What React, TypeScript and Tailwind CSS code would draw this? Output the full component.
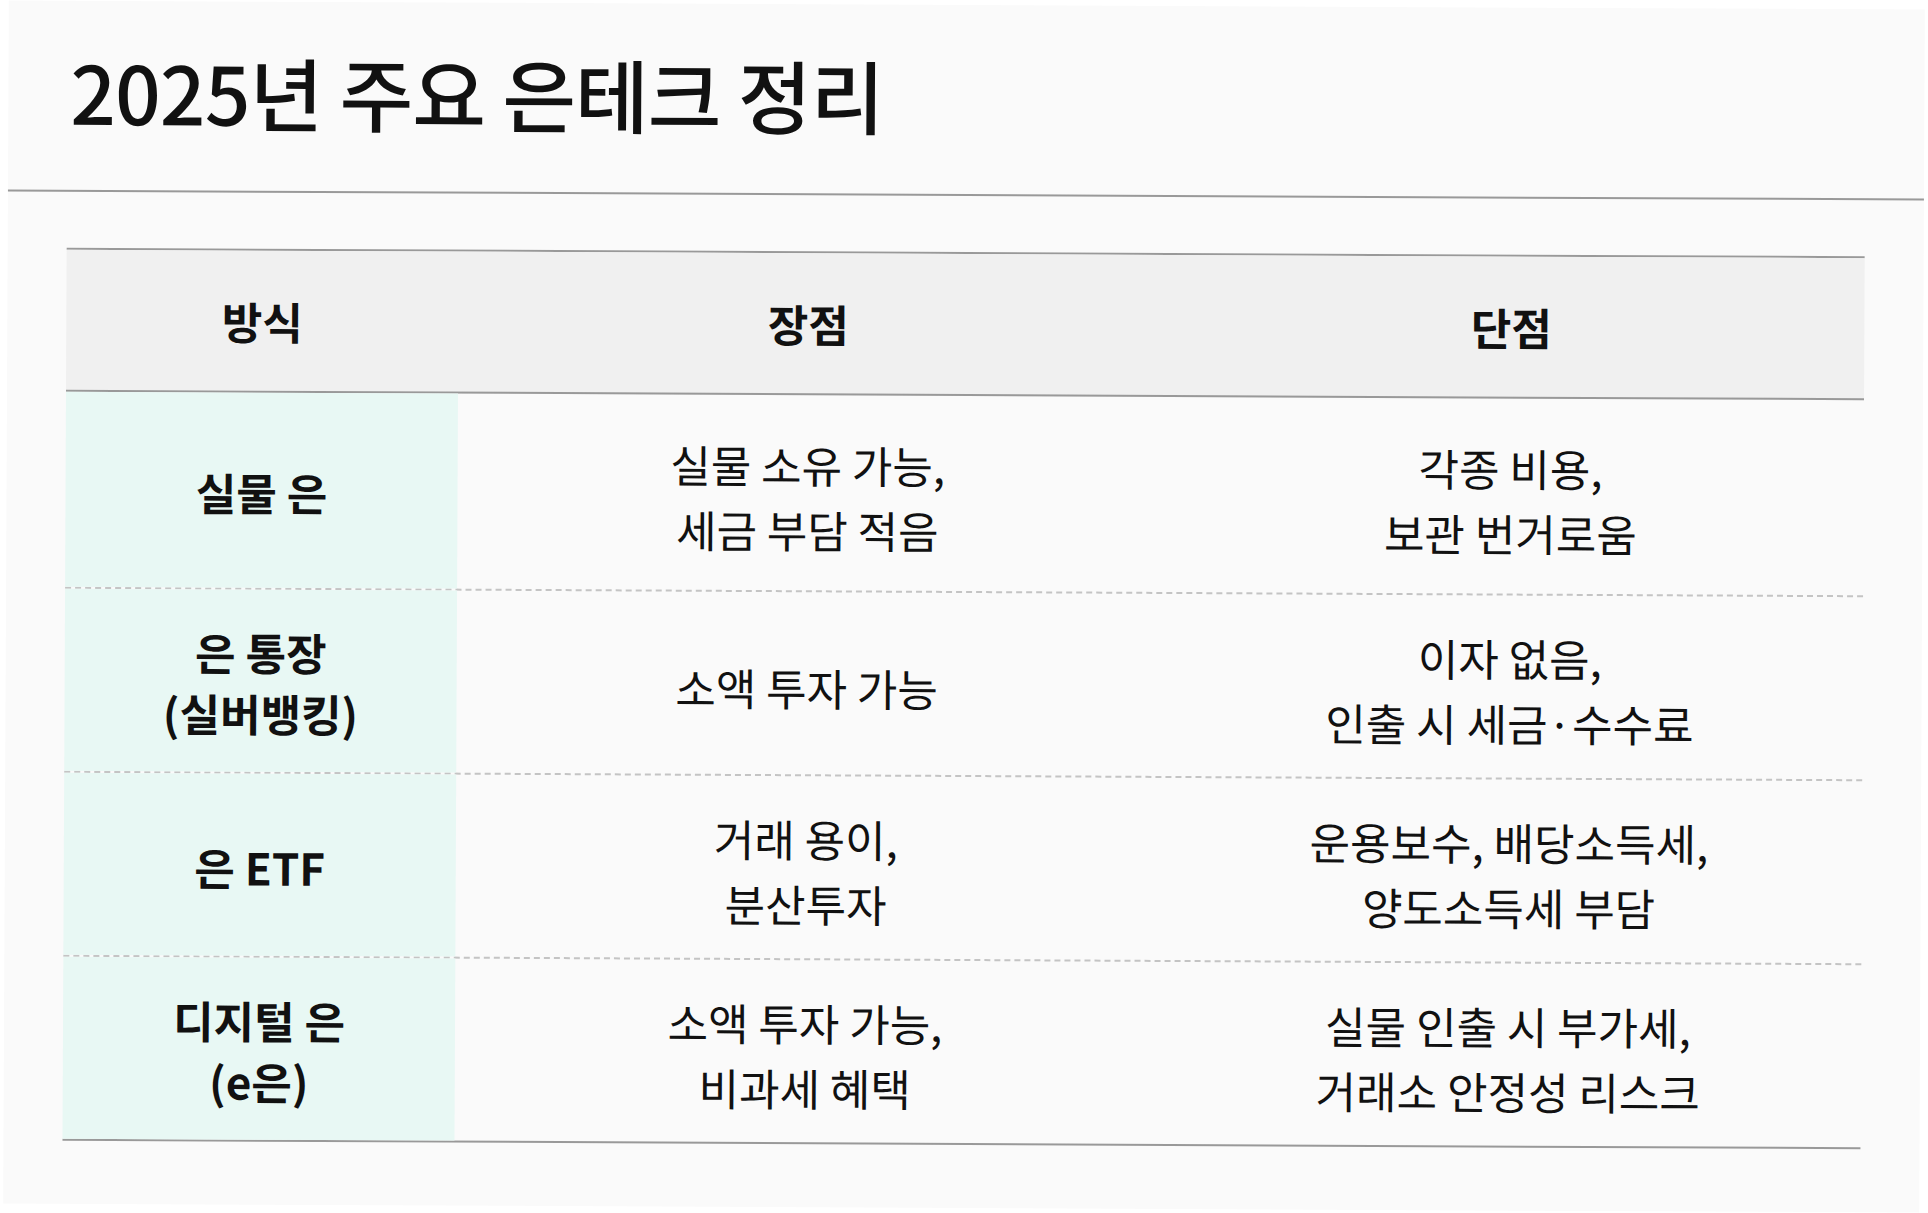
const rows = [
  {
    method: ["실물 은"],
    pros: ["실물 소유 가능,", "세금 부담 적음"],
    cons: ["각종 비용,", "보관 번거로움"],
    h: "h-[197px]",
  },
  {
    method: ["은 통장", "(실버뱅킹)"],
    pros: ["소액 투자 가능"],
    cons: ["이자 없음,", "인출 시 세금·수수료"],
    h: "h-[184px]",
  },
  {
    method: ["은 ETF"],
    pros: ["거래 용이,", "분산투자"],
    cons: ["운용보수, 배당소득세,", "양도소득세 부담"],
    h: "h-[184px]",
  },
  {
    method: ["디지털 은", "(e은)"],
    pros: ["소액 투자 가능,", "비과세 혜택"],
    cons: ["실물 인출 시 부가세,", "거래소 안정성 리스크"],
    h: "h-[184px]",
  },
];

function Lines({ items }: { items: string[] }) {
  return (
    <div className="flex flex-col items-center">
      {items.map((t) => (
        <span key={t} className="whitespace-nowrap">
          {t}
        </span>
      ))}
    </div>
  );
}

export default function App() {
  return (
    <div className="h-[1213px] w-full overflow-hidden bg-white pt-[5px] pl-[6px] font-['Noto_Sans_CJK_KR','Noto_Sans',sans-serif] text-[#111]">
      <div className="h-[1203px] w-[1916px] rotate-[0.27deg] bg-[#fafafa]">
        {/* Title */}
        <div className="flex h-[191px] items-start border-b-2 border-[#999] pl-[62px] pt-[34px]">
          <h1 className="text-[80px] font-medium leading-[110px] tracking-[-0.01em]">
            2025년 주요 은테크 정리
          </h1>
        </div>

        {/* Table */}
        <div className="mx-[59px] mt-[56px] border-t-2 border-[#999]">
          <div className="grid h-[142px] grid-cols-[392px_700px_1fr] border-b-2 border-[#999] bg-[#f0f0f0] text-[44px] font-bold">
            <div className="flex items-center justify-center">방식</div>
            <div className="flex items-center justify-center">장점</div>
            <div className="flex items-center justify-center">단점</div>
          </div>

          {rows.map((r, i) => (
            <div
              key={i}
              className={`grid grid-cols-[392px_700px_1fr] ${r.h} ${
                i < rows.length - 1
                  ? "border-b-2 border-dashed border-[#c4c4c4]"
                  : "border-b-2 border-[#999]"
              }`}
            >
              <div className="flex items-center justify-center bg-[#e8f8f4] pt-[4px] text-[44px] font-bold leading-[61px]">
                <Lines items={r.method} />
              </div>
              <div className="flex items-center justify-center pt-[8px] text-[44px] leading-[65px]">
                <Lines items={r.pros} />
              </div>
              <div className="flex items-center justify-center pt-[8px] text-[44px] leading-[65px]">
                <Lines items={r.cons} />
              </div>
            </div>
          ))}
        </div>
      </div>
    </div>
  );
}
